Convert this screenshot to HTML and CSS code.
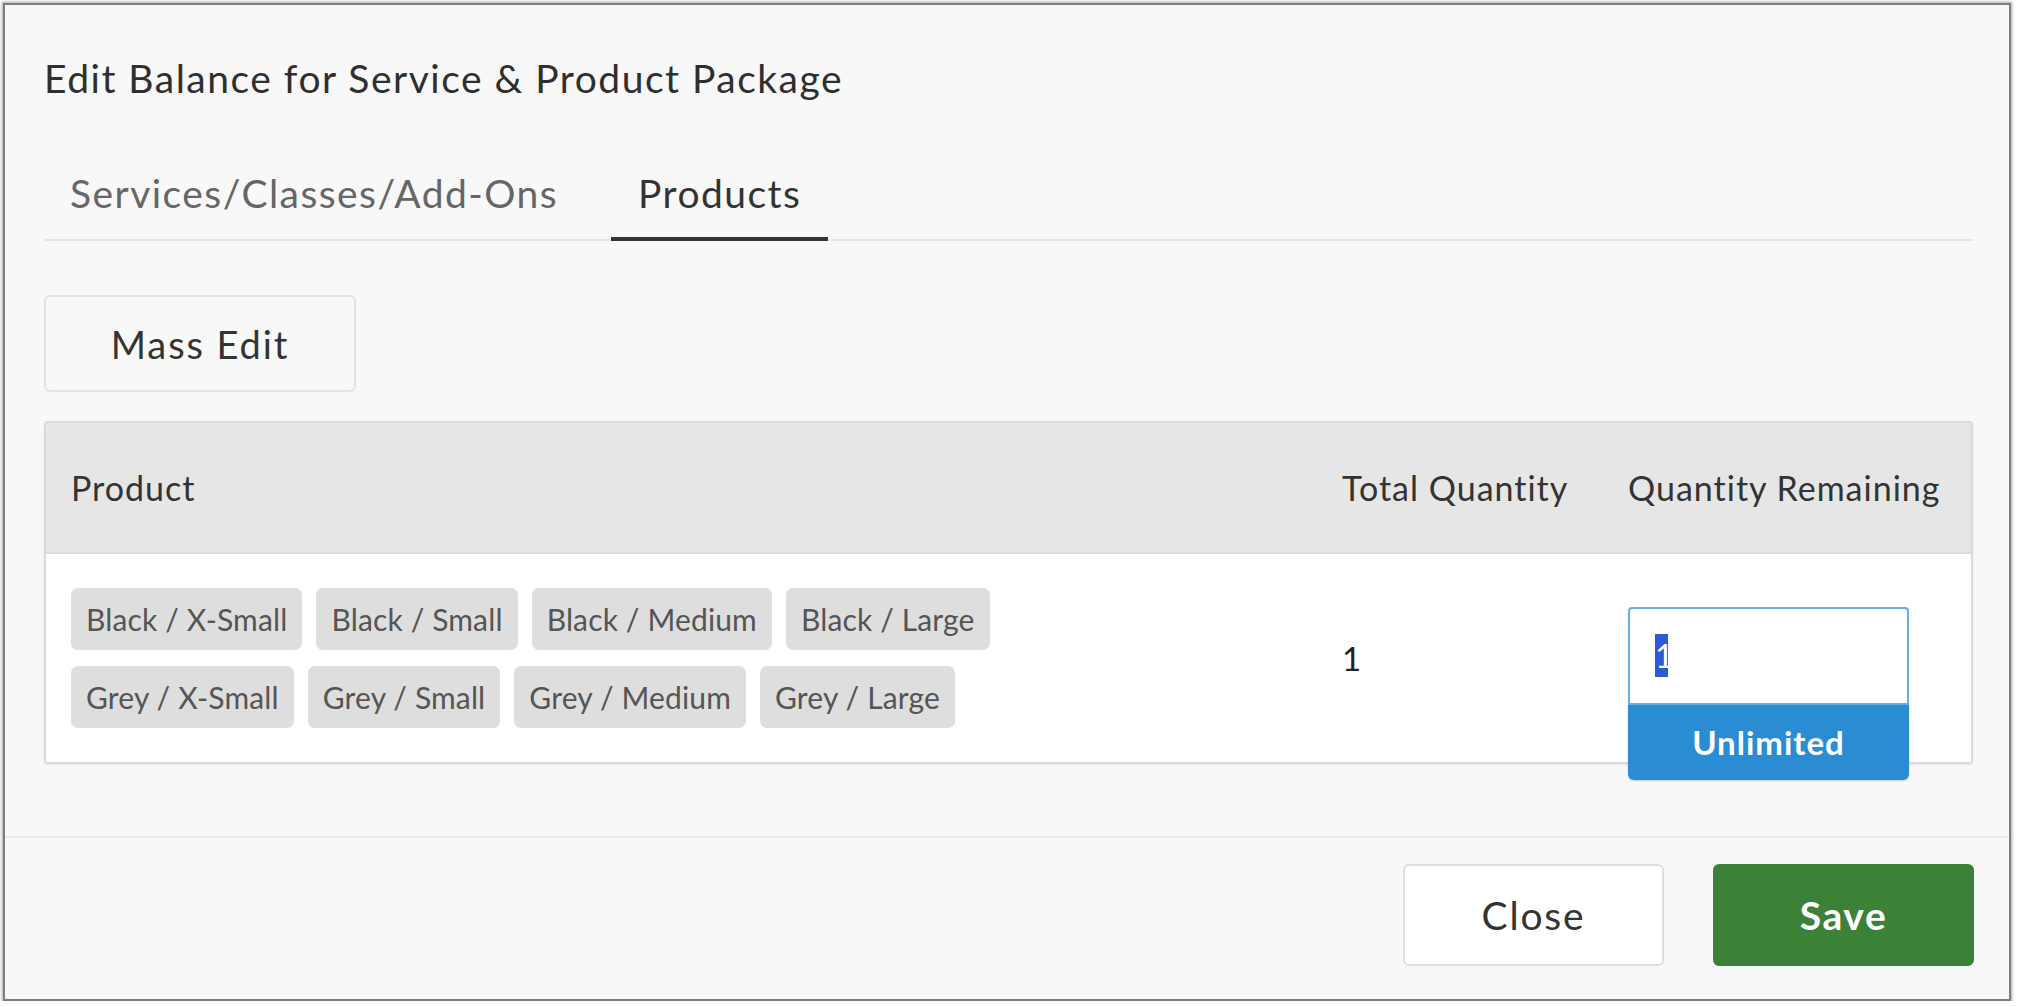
FILE: index.html
```html
<!DOCTYPE html>
<html lang="en">
<head>
<meta charset="utf-8">
<title>Edit Balance</title>
<link rel="stylesheet" href="styles.css">
</head>
<body>
<div class="modal">
  <div class="modal-body">
    <h1 class="title">Edit Balance for Service &amp; Product Package</h1>
    <div class="tabs">
      <div class="tab">Services/Classes/Add-Ons</div>
      <div class="tab active">Products</div>
    </div>
    <button class="btn btn-mass">Mass Edit</button>
    <div class="table">
      <div class="row thead">
        <div class="cell">Product</div>
        <div class="cell">Total Quantity</div>
        <div class="cell">Quantity Remaining</div>
      </div>
      <div class="row tbody">
        <div class="cell chips">
          <div class="chip-row">
            <span class="chip">Black / X-Small</span>
            <span class="chip">Black / Small</span>
            <span class="chip">Black / Medium</span>
            <span class="chip">Black / Large</span>
          </div>
          <div class="chip-row">
            <span class="chip">Grey / X-Small</span>
            <span class="chip">Grey / Small</span>
            <span class="chip">Grey / Medium</span>
            <span class="chip">Grey / Large</span>
          </div>
        </div>
        <div class="cell qty">1</div>
        <div class="cell">
          <div class="combo">
            <div class="input"><span class="sel">1</span></div>
            <div class="dropdown">Unlimited</div>
          </div>
        </div>
      </div>
    </div>
  </div>
  <div class="modal-footer">
    <button class="btn btn-close">Close</button>
    <button class="btn btn-save">Save</button>
  </div>
</div>
</body>
</html>
```

FILE: styles.css
```css
html, body {
  margin: 0;
  padding: 0;
  background: #ffffff;
}
body {
  font-family: "Lato", "Liberation Sans", sans-serif;
  color: #333333;
}
.modal {
  margin: 3px 6px 0 3px;
  height: 998px;
  box-sizing: border-box;
  background: #f8f8f8;
  border: 2px solid #7e7e7e;
  box-shadow: 0 0 3px 1px rgba(0, 0, 0, 0.35);
  display: flex;
  flex-direction: column;
}
.modal-body {
  padding: 0 36px 72px 39px;
  position: relative;
}
.title {
  margin: 50px 0 0 0;
  font-size: 39px;
  font-weight: 400;
  line-height: 47px;
  letter-spacing: 1.5px;
  color: #2f2f2f;
}
.tabs {
  display: flex;
  gap: 26px;
  margin-top: 68px;
  border-bottom: 2px solid #e6e6e6;
}
.tab {
  font-size: 39px;
  line-height: 47px;
  letter-spacing: 1.45px;
  padding: 0 27px 20px 27px;
  color: #666666;
  border-bottom: 4px solid transparent;
  margin-bottom: -2px;
}
.tab:first-child {
  padding-left: 26px;
}
.tab.active {
  color: #333333;
  border-bottom-color: #333333;
}
.btn {
  font-family: "Lato", "Liberation Sans", sans-serif;
  cursor: pointer;
  box-sizing: border-box;
  border-radius: 6px;
}
.btn-mass {
  display: block;
  margin-top: 54px;
  width: 312px;
  height: 97px;
  background: #f8f8f8;
  border: 2px solid #e3e3e3;
  font-size: 38px;
  letter-spacing: 1.9px;
  color: #333333;
}
.table {
  margin-top: 29px;
  border: 2px solid #dadada;
  border-radius: 4px;
  box-shadow: 0 1px 2px rgba(0, 0, 0, 0.08);
}
.row {
  display: grid;
  grid-template-columns: 1fr 286px 368px;
  align-items: center;
}
.cell {
  padding-left: 25px;
}
.thead {
  height: 129px;
  background: #e6e6e6;
  border-bottom: 2px solid #dcdcdc;
  font-size: 34px;
  letter-spacing: 1px;
  color: #333333;
}
.tbody {
  background: #ffffff;
  height: 208px;
}
.chips {
  display: flex;
  flex-direction: column;
  gap: 16px;
}
.chip-row {
  display: flex;
  gap: 14px;
}
.chip {
  background: #dedede;
  color: #555555;
  font-size: 30px;
  letter-spacing: 0.15px;
  height: 62px;
  line-height: 62px;
  padding: 0 15px;
  border-radius: 7px;
}
.qty {
  font-size: 33px;
  color: #222222;
}
.combo {
  position: relative;
  width: 281px;
  height: 98px;
  margin-top: -5px;
}
.input {
  box-sizing: border-box;
  height: 98px;
  border: 2px solid #67aee6;
  border-radius: 4px 4px 0 0;
  background: #ffffff;
  padding-left: 25px;
  display: flex;
  align-items: center;
  font-size: 32px;
}
.sel {
  background: #2b5ad5;
  color: #ffffff;
  line-height: 43px;
  letter-spacing: -6px;
}
.dropdown {
  position: absolute;
  left: 0;
  top: 98px;
  width: 281px;
  height: 75px;
  box-sizing: border-box;
  background: #2a8dd4;
  color: #ffffff;
  border-radius: 0 0 6px 6px;
  font-size: 33px;
  font-weight: 700;
  letter-spacing: 1px;
  display: flex;
  align-items: center;
  justify-content: center;
  box-shadow: 0 1px 2px rgba(0, 0, 0, 0.2);
}
.modal-footer {
  border-top: 2px solid #e8e8e8;
  display: flex;
  justify-content: flex-end;
  gap: 49px;
  padding: 26px 35px 0 0;
}
.btn-close,
.btn-save {
  width: 261px;
  height: 102px;
  font-size: 39px;
}
.btn-close {
  background: #ffffff;
  border: 2px solid #dedede;
  color: #333333;
  letter-spacing: 1.8px;
}
.btn-save {
  background: #3b8137;
  border: 2px solid #3b8137;
  color: #ffffff;
  font-weight: 700;
  letter-spacing: 1.6px;
}
```
